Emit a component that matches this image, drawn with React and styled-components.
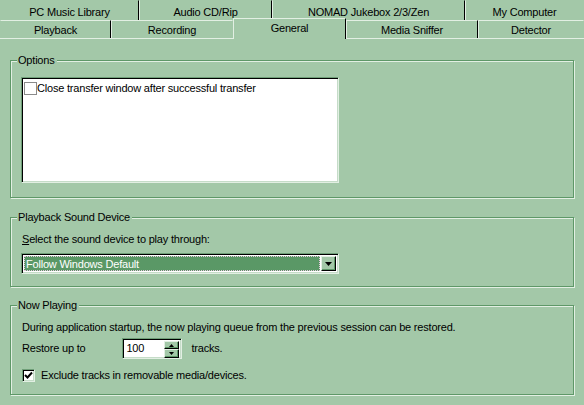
import React from 'react';
import styled, { createGlobalStyle } from 'styled-components';

const BG = '#A3C8A8';
const DARK = '#5E9868';
const LIGHT = '#E2EFE3';

const Global = createGlobalStyle`
  html, body { margin: 0; padding: 0; background: ${BG}; }
  body {
    font-family: "Liberation Sans", Arial, sans-serif;
    font-size: 11px;
    letter-spacing: -0.2px;
    color: #000;
  }
  * { box-sizing: border-box; }
`;

const Window = styled.div`
  width: 584px;
  height: 405px;
  overflow: hidden;
  background: ${BG};
  display: flex;
  flex-direction: column;
`;

const Tabs = styled.div`
  display: flex;
  flex-direction: column;
  position: relative;
  z-index: 2;
`;

const TabRow = styled.div`
  display: flex;
  height: ${p => p.$h}px;
  align-items: flex-end;
`;

const Tab = styled.div`
  flex: 0 0 ${p => p.$w}px;
  height: ${p => (p.$active ? p.$h + 3 : p.$h)}px;
  margin-bottom: ${p => (p.$active ? -1 : 0)}px;
  border-left: 1px solid ${p => (p.$noLeft ? 'transparent' : LIGHT)};
  border-top: 1px solid ${p => (p.$noTop ? 'transparent' : LIGHT)};
  border-right: 1px solid ${p => (p.$noRight ? 'transparent' : '#000')};
  background: ${BG};
  display: flex;
  justify-content: center;
  align-items: ${p => (p.$active ? 'flex-start' : 'center')};
  padding-top: ${p => (p.$active ? 3 : p.$pt || 0)}px;
  white-space: nowrap;
  position: relative;
  z-index: ${p => (p.$active ? 3 : 1)};
`;

const Panel = styled.div`
  flex: 1;
  border-top: 1px solid ${LIGHT};
  display: flex;
  flex-direction: column;
`;

const Group = styled.section`
  position: relative;
  margin: ${p => p.$mt}px 10px 0;
  height: ${p => p.$h}px;
  border: 1px solid ${DARK};
  box-shadow: inset 1px 1px ${LIGHT}, 1px 1px ${LIGHT};
  padding: ${p => p.$pt}px 10px 0;
  display: flex;
  flex-direction: column;
  align-items: flex-start;
`;

const Legend = styled.span`
  position: absolute;
  top: -7px;
  left: 6px;
  padding: 0 2px 0 1px;
  background: ${BG};
  line-height: 13px;
  white-space: nowrap;
`;

const Sunken = styled.div`
  border: 1px solid;
  border-color: #6F9F78 ${LIGHT} ${LIGHT} #6F9F78;
  box-shadow: inset 1px 1px #000, inset -1px -1px #C5DCC8;
`;

const ListBox = styled(Sunken)`
  width: 318px;
  height: 106px;
  background: #fff;
  padding: 3px 0 0 2px;
`;

const ListItem = styled.div`
  display: flex;
  align-items: center;
  height: 14px;
  line-height: 13px;
  white-space: nowrap;
`;

const FlatBox = styled.span`
  width: 13px;
  height: 13px;
  border: 1px solid #8a8a8a;
  background: #fff;
  flex: none;
`;

const Text = styled.div`
  line-height: 13px;
  white-space: nowrap;
  margin-left: ${p => p.$ml || 0}px;
  margin-top: ${p => p.$mt || 0}px;
`;

const Accel = styled.span`
  text-decoration: underline;
`;

const Combo = styled(Sunken)`
  margin-top: ${p => p.$mt}px;
  width: 318px;
  height: 21px;
  background: #fff;
  display: flex;
  padding: 2px;
  gap: 1px;
`;

const ComboValue = styled.div`
  flex: 1;
  background: #5A9866;
  color: #fff;
  outline: 1px dotted #E8C8E0;
  outline-offset: -1px;
  display: flex;
  align-items: center;
  padding-left: 2px;
  white-space: nowrap;
`;

const ArrowButton = styled.div`
  flex: none;
  width: 15px;
  height: ${p => (p.$h ? p.$h + 'px' : 'auto')};
  background: ${BG};
  border: 1px solid;
  border-color: ${LIGHT} #000 #000 ${LIGHT};
  box-shadow: inset -1px -1px ${DARK};
  display: flex;
  align-items: center;
  justify-content: center;
`;

const Row = styled.div`
  display: flex;
  align-items: center;
  margin-top: ${p => p.$mt || 0}px;
  margin-left: ${p => p.$ml || 0}px;
  height: ${p => p.$h}px;
`;

const SpinBox = styled(Sunken)`
  width: 60px;
  height: 21px;
  background: #fff;
  display: flex;
  padding: 2px 2px 2px 3px;
  margin-left: ${p => p.$ml}px;
  margin-right: 9px;
`;

const SpinValue = styled.div`
  flex: 1;
  line-height: 15px;
`;

const SpinButtons = styled.div`
  display: flex;
  flex-direction: column;
  width: 15px;
`;

const CheckBox = styled(Sunken)`
  width: 13px;
  height: 13px;
  background: #fff;
  display: flex;
  align-items: center;
  justify-content: center;
  flex: none;
  margin-right: 6px;
`;

const DownArrow = () => (
  <svg width="7" height="4" viewBox="0 0 7 4">
    <polygon points="0,0 7,0 3.5,4" fill="#000" />
  </svg>
);

const TinyArrow = ({ up }) => (
  <svg width="5" height="3" viewBox="0 0 5 3">
    <polygon points={up ? '0,3 5,3 2.5,0' : '0,0 5,0 2.5,3'} fill="#000" />
  </svg>
);

export default function App() {
  return (
    <Window>
      <Global />
      <Tabs>
        <TabRow $h={20}>
          <Tab $w={139} $h={20} $noLeft $noTop $pt={3}>PC Music Library</Tab>
          <Tab $w={133} $h={20} $noTop $pt={3}>Audio CD/Rip</Tab>
          <Tab $w={193} $h={20} $noTop $pt={3}>NOMAD Jukebox 2/3/Zen</Tab>
          <Tab $w={119} $h={20} $noTop $noRight $pt={3}>My Computer</Tab>
        </TabRow>
        <TabRow $h={18}>
          <Tab $w={111} $h={18} $noLeft $pt={1}>Playback</Tab>
          <Tab $w={122} $h={18} $noRight $pt={1}>Recording</Tab>
          <Tab $w={113} $h={18} $active>General</Tab>
          <Tab $w={132} $h={18} $pt={1}>Media Sniffer</Tab>
          <Tab $w={106} $h={18} $noRight $pt={1}>Detector</Tab>
        </TabRow>
      </Tabs>
      <Panel>
        <Group $mt={21} $h={138} $pt={16}>
          <Legend>Options</Legend>
          <ListBox>
            <ListItem>
              <FlatBox />
              <span>Close transfer window after successful transfer</span>
            </ListItem>
          </ListBox>
        </Group>

        <Group $mt={19} $h={70} $pt={15}>
          <Legend>Playback Sound Device</Legend>
          <Text $ml={1}><Accel>S</Accel>elect the sound device to play through:</Text>
          <Combo $mt={7}>
            <ComboValue>Follow Windows Default</ComboValue>
            <ArrowButton><DownArrow /></ArrowButton>
          </Combo>
        </Group>

        <Group $mt={18} $h={90} $pt={15}>
          <Legend>Now Playing</Legend>
          <Text $ml={1}>During application startup, the now playing queue from the previous session can be restored.</Text>
          <Row $mt={4} $ml={1} $h={21}>
            <Text>Restore up to</Text>
            <SpinBox $ml={37}>
              <SpinValue>100</SpinValue>
              <SpinButtons>
                <ArrowButton $h={8}><TinyArrow up /></ArrowButton>
                <ArrowButton $h={9}><TinyArrow /></ArrowButton>
              </SpinButtons>
            </SpinBox>
            <Text>tracks.</Text>
          </Row>
          <Row $mt={10} $ml={1} $h={13}>
            <CheckBox>
              <svg width="9" height="9" viewBox="0 0 9 9">
                <polyline points="1,4 3.5,6.5 8,1.5" fill="none" stroke="#000" strokeWidth="2" />
              </svg>
            </CheckBox>
            <Text>Exclude tracks in removable media/devices.</Text>
          </Row>
        </Group>
      </Panel>
    </Window>
  );
}
